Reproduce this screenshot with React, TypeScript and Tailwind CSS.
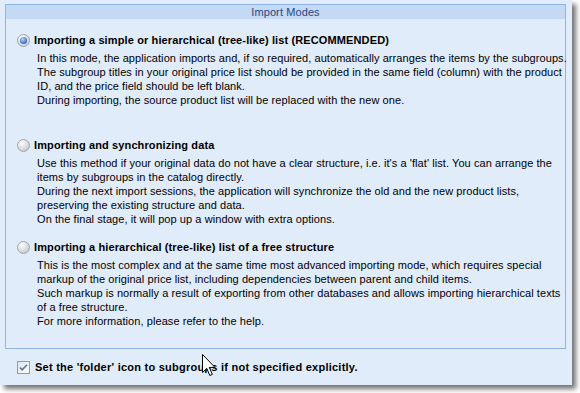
import React from 'react';

const RadioOn = () => (
  <svg width="13" height="13" viewBox="0 0 13 13" className="shrink-0">
    <defs>
      <radialGradient id="ringOn" cx="35%" cy="30%" r="75%">
        <stop offset="0%" stopColor="#ffffff" />
        <stop offset="100%" stopColor="#c9cfd8" />
      </radialGradient>
      <radialGradient id="dotOn" cx="40%" cy="35%" r="70%">
        <stop offset="0%" stopColor="#b9d3f4" />
        <stop offset="60%" stopColor="#5d8fd6" />
        <stop offset="100%" stopColor="#2e5fae" />
      </radialGradient>
    </defs>
    <circle cx="6.5" cy="6.5" r="6" fill="url(#ringOn)" stroke="#9aa3b0" strokeWidth="1" />
    <circle cx="6.5" cy="6.5" r="3.6" fill="url(#dotOn)" />
  </svg>
);

const RadioOff = () => (
  <svg width="13" height="13" viewBox="0 0 13 13" className="shrink-0">
    <defs>
      <radialGradient id="ringOff" cx="35%" cy="30%" r="75%">
        <stop offset="0%" stopColor="#ffffff" />
        <stop offset="100%" stopColor="#c4c7cc" />
      </radialGradient>
    </defs>
    <circle cx="6.5" cy="6.5" r="6" fill="url(#ringOff)" stroke="#a3a7ad" strokeWidth="1" />
  </svg>
);

const CheckOn = () => (
  <svg width="13" height="13" viewBox="0 0 13 13" className="shrink-0">
    <defs>
      <linearGradient id="boxBg" x1="0" y1="0" x2="1" y2="1">
        <stop offset="0%" stopColor="#dfe3ea" />
        <stop offset="100%" stopColor="#ffffff" />
      </linearGradient>
    </defs>
    <rect x="0.5" y="0.5" width="12" height="12" fill="url(#boxBg)" stroke="#8c9bb4" />
    <path d="M3 6.5 L5.2 8.8 L10 3.8" fill="none" stroke="#5473a8" strokeWidth="1.6" />
  </svg>
);

// mouse pointer caught in the screenshot
const Cursor = () => (
  <svg width="15" height="24" viewBox="0 0 15 24" className="absolute left-[202px] top-[354px]">
    <path
      d="M0.5 0.5 L0.5 18.5 L4.8 14.4 L7.8 21.5 L10.3 20.4 L7.3 13.4 L13 13.4 Z"
      fill="#ffffff"
      stroke="#000000"
      strokeWidth="1"
    />
  </svg>
);

interface Section {
  title: string;
  selected: boolean;
  lines: string[];
  gap: string;
}

const sections: Section[] = [
  {
    title: 'Importing a simple or hierarchical (tree-like) list (RECOMMENDED)',
    selected: true,
    gap: 'mt-[14px]',
    lines: [
      'In this mode, the application imports and, if so required, automatically arranges the items by the subgroups.',
      'The subgroup titles in your original price list should be provided in the same field (column) with the product',
      'ID, and the price field should be left blank.',
      'During importing, the source product list will be replaced with the new one.',
    ],
  },
  {
    title: 'Importing and synchronizing data',
    selected: false,
    gap: 'mt-[31px]',
    lines: [
      "Use this method if your original data do not have a clear structure, i.e. it's a 'flat' list. You can arrange the",
      'items by subgroups in the catalog directly.',
      'During the next import sessions, the application will synchronize the old and the new product lists,',
      'preserving the existing structure and data.',
      'On the final stage, it will pop up a window with extra options.',
    ],
  },
  {
    title: 'Importing a hierarchical (tree-like) list of a free structure',
    selected: false,
    gap: 'mt-[14px]',
    lines: [
      'This is the most complex and at the same time most advanced importing mode, which requires special',
      'markup of the original price list, including dependencies between parent and child items.',
      'Such markup is normally a result of exporting from other databases and allows importing hierarchical texts',
      'of a free structure.',
      'For more information, please refer to the help.',
    ],
  },
];

const App: React.FC = () => {
  return (
    <div className="relative w-[580px] h-[393px] bg-white overflow-hidden font-['Liberation_Sans',Arial,sans-serif] text-[11px] text-black">
      <div className="w-[572px] h-[385px] bg-[#e1ecfa] pt-[4px] pl-[5px] shadow-[4px_4px_5px_rgba(0,0,0,0.55)]">
        <div className="w-[561px] h-[345px] border border-[#91b4e8] flex flex-col">
          <div className="h-[14px] bg-[#c3d9f4] flex items-center justify-center text-[#27467f] leading-[14px] tracking-[0.1px]">
            Import Modes
          </div>
          {sections.map((s) => (
            <div key={s.title} className={s.gap}>
              <div className="flex items-center gap-[4px] pl-[11px] h-[14px]">
                {s.selected ? <RadioOn /> : <RadioOff />}
                <span className="font-bold leading-[14px] tracking-[0.12px]">{s.title}</span>
              </div>
              <div className="mt-[4px] pl-[31px] leading-[14px] whitespace-nowrap tracking-[0.07px]">
                {s.lines.map((l) => (
                  <div key={l}>{l}</div>
                ))}
              </div>
            </div>
          ))}
        </div>
        <div className="flex items-center gap-[5px] pl-[12px] mt-[11px] h-[14px]">
          <CheckOn />
          <span className="font-bold leading-[14px] tracking-[0.24px]">Set the 'folder' icon to subgroups if not specified explicitly.</span>
        </div>
      </div>
      <Cursor />
    </div>
  );
};

export default App;
